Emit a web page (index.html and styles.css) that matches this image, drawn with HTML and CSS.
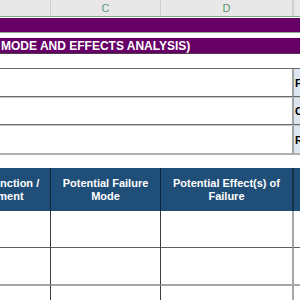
FILE: index.html
```html
<!DOCTYPE html>
<html>
<head>
<meta charset="utf-8">
<link rel="stylesheet" href="styles.css">
</head>
<body>
<div class="sheet">
  <div class="colhead">
    <div class="ch ch-b">B</div>
    <div class="ch ch-c">C</div>
    <div class="ch ch-d">D</div>
    <div class="ch ch-e">E</div>
  </div>
  <div class="gap1"></div>
  <div class="band band-top"></div>
  <div class="gap2"></div>
  <div class="band band-title"><span class="title">MODE AND EFFECTS ANALYSIS)</span></div>
  <div class="gap3"></div>
  <div class="info">
    <div class="info-row r1"><div class="info-main"></div><div class="info-side">FMEA Number</div></div>
    <div class="info-row r2"><div class="info-main"></div><div class="info-side">Core Team</div></div>
    <div class="info-row r3"><div class="info-main"></div><div class="info-side">Responsibility</div></div>
  </div>
  <div class="gap4"></div>
  <div class="grid">
    <div class="th c1">Process Function /<br>Requirement</div>
    <div class="th c2">Potential Failure<br>Mode</div>
    <div class="th c3">Potential Effect(s) of<br>Failure</div>
    <div class="th c4">Severity</div>

    <div class="td c1 row-a"></div>
    <div class="td c2 row-a"></div>
    <div class="td c3 row-a"></div>
    <div class="td c4 row-a"></div>

    <div class="td c1 row-b"></div>
    <div class="td c2 row-b"></div>
    <div class="td c3 row-b"></div>
    <div class="td c4 row-b"></div>

    <div class="td c1 row-c"></div>
    <div class="td c2 row-c"></div>
    <div class="td c3 row-c"></div>
    <div class="td c4 row-c"></div>
  </div>
</div>
</body>
</html>
```

FILE: styles.css
```css
html, body {
  margin: 0;
  padding: 0;
  background: #ffffff;
  width: 300px;
  height: 300px;
  overflow: hidden;
  font-family: "Liberation Sans", Arial, sans-serif;
}

.sheet {
  margin-left: -70px;
  width: 450px;
}

.colhead {
  display: grid;
  grid-template-columns: 121px 110px 133px 86px;
  height: 16px;
  background: #e8e8e8;
  border-bottom: 1px solid #79ad8b;
}

.ch {
  font-size: 11px;
  line-height: 16px;
  text-align: center;
  color: #5f9376;
  border-right: 1px solid #cfcfcf;
}

.ch-d { border-right: 2px solid #d0d0d0; }
.ch-e { border-right: none; }

.gap1 { height: 1px; }

.band {
  background: #660066;
}

.band-top {
  height: 14px;
  border-bottom: 1px solid #8eae9a;
}

.gap2 { height: 5px; }

.band-title {
  height: 15px;
  border-bottom: 1px solid #4a3a4a;
  padding-left: 71px;
  display: flex;
  align-items: center;
}

.title {
  color: #ffffff;
  font-weight: bold;
  font-size: 12px;
  white-space: nowrap;
}

.gap3 { height: 14px; }

.info {
  border-top: 1px solid #6b6b6b;
}

.info-row {
  display: flex;
}

.r1 { height: 27px; border-bottom: 1px solid #6b6b6b; }
.r2 { height: 26px; border-top: 1px solid #c6c6c6; border-bottom: 1px solid #6b6b6b; }
.r3 { height: 27px; border-top: 1px solid #c6c6c6; border-bottom: 2px solid #b0b0b0; }

.info-main {
  width: 362px;
  border-right: 2px solid #a3a3a3;
}

.info-side {
  flex: 1;
  background: #dce6f1;
  font-size: 11px;
  font-weight: bold;
  color: #000000;
  padding-left: 1px;
  display: flex;
  align-items: center;
  white-space: nowrap;
}

.gap4 { height: 13px; }

.grid {
  display: grid;
  grid-template-columns: 121px 110px 133px 86px;
  grid-template-rows: 43px 37px 38px 30px;
}

.th {
  background: #1f4e79;
  color: #ffffff;
  font-weight: bold;
  font-size: 11px;
  line-height: 13px;
  text-align: center;
  display: flex;
  align-items: center;
  justify-content: center;
  white-space: nowrap;
  border-right: 1px solid #0f2436;
}

.th.c3 { border-right: 2px solid #14314c; }
.th.c4 { border-right: none; }

.td {
  background: #ffffff;
  border-right: 1px solid #3c3c3c;
}

.td.c3 { border-right: 2px solid #a6a6a6; }
.td.c4 { border-right: none; }

.row-a { border-bottom: 1px solid #5e5e5e; }
.row-b { border-bottom: 2px solid #a6a6a6; }
```
